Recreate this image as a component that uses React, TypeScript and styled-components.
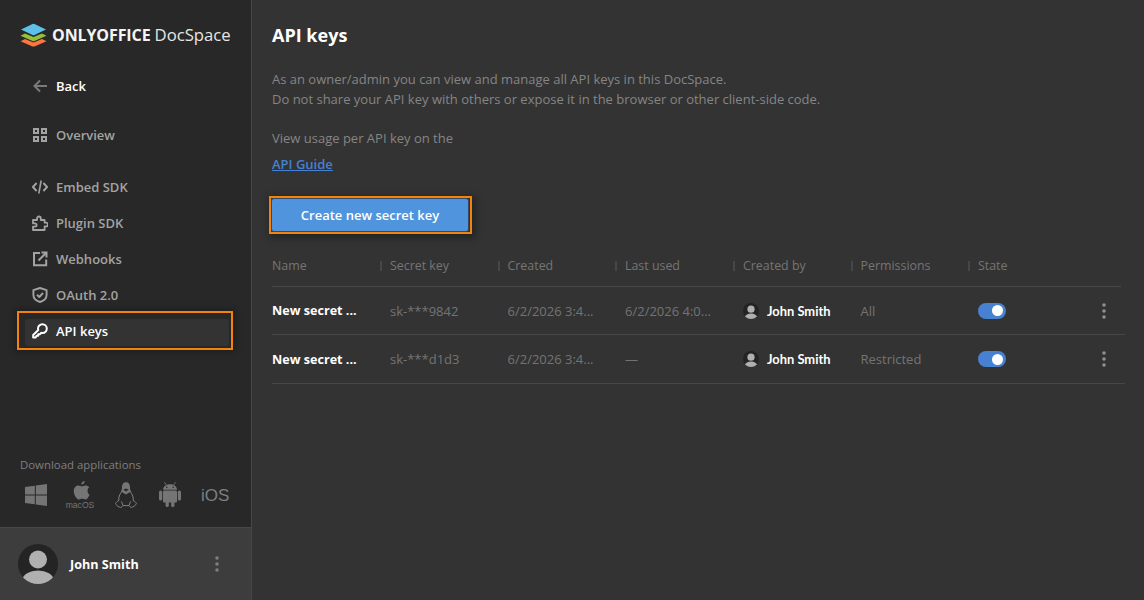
import React from "react";
import styled, { createGlobalStyle } from "styled-components";

const Global = createGlobalStyle`
  html, body { margin: 0; padding: 0; background: #333; }
  body { font-family: "Open Sans", "Liberation Sans", sans-serif; }
  * { box-sizing: border-box; }
`;

const Page = styled.div`
  display: flex;
  width: 1144px;
  height: 600px;
  overflow: hidden;
  background: #333333;
`;

const Sidebar = styled.aside`
  width: 252px;
  height: 600px;
  flex: none;
  display: flex;
  flex-direction: column;
  background: #282828;
  border-right: 1px solid #474747;
`;

const LogoRow = styled.div`
  display: flex;
  align-items: center;
  gap: 5px;
  height: 24px;
  margin: 23px 0 0 20px;
`;

const LogoText = styled.span`
  font-size: 16.7px;
  line-height: 24px;
  color: #e6e6e6;
  white-space: nowrap;
  b { font-size: 16px; font-weight: 700; color: #f4f4f4; margin-right: 4px; letter-spacing: -0.1px; }
`;

const Nav = styled.nav`
  display: flex;
  flex-direction: column;
  margin-top: 21px;
  padding: 0 22px 0 25px;
`;

const NavGroup = styled.div<{ $gap: number }>`
  display: flex;
  flex-direction: column;
  margin-bottom: ${(p) => p.$gap}px;
`;

const NavItem = styled.div<{ $active?: boolean; $white?: boolean }>`
  position: relative;
  display: flex;
  align-items: center;
  gap: 8px;
  height: 36px;
  padding-left: 7px;
  font-size: 13px;
  font-weight: 600;
  color: ${(p) => (p.$active || p.$white ? "#ffffff" : "#a3a3a3")};
  background: ${(p) => (p.$active ? "#333333" : "transparent")};
  ${(p) =>
    p.$active &&
    `
    height: 27px;
    margin: 6px 0 3px;
    padding-bottom: 3px;
    border-radius: 3px;
    &::after {
      content: "";
      position: absolute;
      inset: -8px -4px -4px -8px;
      border: 2px solid #f5820d;
      box-shadow: 0 0 6px 2px rgba(0,0,0,0.25);
      pointer-events: none;
    }
  `}
  svg { flex: none; }
`;

const Spacer = styled.div`
  flex: 1;
`;

const DownloadBlock = styled.div`
  padding: 0 20px;
  height: 70px;
`;

const DownloadLabel = styled.div`
  font-size: 11.4px;
  line-height: 15px;
  font-weight: 400;
  color: #7f7f7f;
`;

const AppIcons = styled.div`
  display: flex;
  align-items: center;
  height: 27px;
  margin-top: 9px;
  padding-left: 5px;
`;

const AppSlot = styled.div<{ $w: number }>`
  width: ${(p) => p.$w}px;
  flex: none;
  display: flex;
  flex-direction: column;
  align-items: flex-start;
`;

const MacIcon = styled.div`
  display: flex;
  flex-direction: column;
  align-items: center;
  width: 28px;
  margin-left: -1px;
  svg { margin-left: 2px; }
  span {
    font-family: "Liberation Sans", sans-serif;
    font-size: 8.6px;
    line-height: 8px;
    margin-top: 1px;
    color: #757575;
  }
`;

const IosLabel = styled.span`
  font-family: "Liberation Sans", sans-serif;
  font-size: 17px;
  line-height: 24px;
  padding-top: 2px;
  color: #7f7f7f;
`;

const Footer = styled.div`
  flex: none;
  height: 73px;
  display: flex;
  align-items: center;
  padding: 0 32px 0 18px;
  background: #3d3d3d;
  border-top: 1px solid #474747;
`;

const FooterName = styled.span`
  flex: 1;
  margin-left: 12px;
  font-size: 12.6px;
  font-weight: 700;
  color: #fff;
`;

const Main = styled.main`
  flex: 1;
  min-width: 0;
  padding: 22px 19px 0 20px;
  display: flex;
  flex-direction: column;
  align-items: flex-start;
`;

const Title = styled.h1`
  margin: 0;
  font-size: 18px;
  line-height: 26px;
  font-weight: 700;
  color: #fff;
`;

const Description = styled.p`
  margin: 21px 0 0;
  font-size: 13px;
  line-height: 20px;
  color: #858585;
`;

const UsageText = styled.p`
  margin: 19px 0 0;
  font-size: 13px;
  line-height: 20px;
  color: #858585;
`;

const GuideLink = styled.a`
  margin-top: 6px;
  font-size: 13px;
  line-height: 20px;
  font-weight: 600;
  color: #4781d1;
  text-decoration: underline;
`;

const CreateButton = styled.button`
  position: relative;
  margin: 24px 0 0 -1px;
  width: 198px;
  height: 34px;
  padding: 0;
  border: 1px solid #2f4b69;
  border-radius: 3px;
  background: #4f94dc;
  color: #fff;
  font-family: inherit;
  font-size: 13px;
  font-weight: 600;
  &::after {
    content: "";
    position: absolute;
    inset: -3px -4px -3px -3px;
    border: 2px solid #f5820d;
    box-shadow: 2px 2px 7px 2px rgba(0, 0, 0, 0.3);
    pointer-events: none;
  }
`;

const Table = styled.div`
  align-self: stretch;
  margin-top: 16px;
`;

const COLS = "118px 117.5px 117.5px 118px 117.5px 117.5px 147px";

const HeaderRow = styled.div`
  display: grid;
  grid-template-columns: ${COLS};
  height: 39px;
  padding-bottom: 2px;
  margin-right: 4px;
  align-items: center;
  border-bottom: 1px solid #474747;
`;

const HeaderCell = styled.div<{ $sep?: boolean }>`
  position: relative;
  font-size: 12.4px;
  line-height: 16px;
  font-weight: 400;
  color: #757575;
  ${(p) =>
    p.$sep &&
    `
    &::before {
      content: "";
      position: absolute;
      left: -10px;
      top: 3px;
      width: 2px;
      height: 10px;
      background: #474747;
    }
  `}
`;

const Row = styled.div<{ $h: number }>`
  display: grid;
  grid-template-columns: ${COLS};
  align-items: center;
  height: ${(p) => p.$h}px;
  border-bottom: 1px solid #474747;
`;

const Cell = styled.div<{ $bold?: boolean }>`
  font-size: ${(p) => (p.$bold ? "12.6px" : "13px")};
  font-weight: ${(p) => (p.$bold ? 700 : 400)};
  color: ${(p) => (p.$bold ? "#fff" : "#737373")};
  white-space: nowrap;
`;

const Owner = styled.div`
  display: flex;
  align-items: center;
  gap: 8px;
  font-family: Lato, "Open Sans", sans-serif;
  font-size: 12.9px;
  font-weight: 700;
  color: #fff;
`;

const StateCell = styled.div`
  display: flex;
  align-items: center;
  justify-content: space-between;
  padding-right: 19px;
`;

const Toggle = styled.div`
  display: flex;
  align-items: center;
  justify-content: flex-end;
  width: 28px;
  height: 16px;
  padding-right: 3px;
  border-radius: 8px;
  background: #4781d1;
  &::after {
    content: "";
    width: 11px;
    height: 11px;
    border-radius: 50%;
    background: #fff;
  }
`;

const Dots = ({ color = "#7f7f7f" }: { color?: string }) => (
  <svg width="4" height="16" viewBox="0 0 4 16" fill={color}>
    <circle cx="2" cy="2" r="1.8" />
    <circle cx="2" cy="8" r="1.8" />
    <circle cx="2" cy="14" r="1.8" />
  </svg>
);

const Avatar = ({ size }: { size: number }) => (
  <svg width={size} height={size} viewBox="0 0 40 40" style={{ flex: "none" }}>
    <defs>
      <clipPath id={`av${size}`}>
        <circle cx="20" cy="20" r="20" />
      </clipPath>
    </defs>
    <circle cx="20" cy="20" r="20" fill="#242424" />
    <g clipPath={`url(#av${size})`} fill="#b0b0b0">
      <circle cx="20" cy="15.5" r="9" />
      <ellipse cx="20" cy="36" rx="15.5" ry="9.5" />
    </g>
  </svg>
);

const Logo = () => (
  <svg width="27" height="24" viewBox="0 0 27 24">
    <path d="M0.5 18.2 L5 16 L13.5 19.4 L22 16 L26.5 18.2 L14.5 23.4 Q13.5 23.8 12.5 23.4 Z" fill="#ff7541" />
    <path d="M0.5 12.8 L5 10.6 L13.5 14 L22 10.6 L26.5 12.8 L14.5 18 Q13.5 18.4 12.5 18 Z" fill="#95c038" />
    <path d="M12.5 0.9 Q13.5 0.5 14.5 0.9 L26 6.4 L14.5 12 Q13.5 12.4 12.5 12 L1 6.4 Z" fill="#5dc0e8" />
  </svg>
);

const ArrowIcon = () => (
  <svg width="16" height="16" viewBox="0 0 16 16" fill="none" stroke="#7a7a7a" strokeWidth="2">
    <path d="M15 8 H3 M8 2.5 L2.5 8 L8 13.5" />
  </svg>
);

const GridIcon = () => (
  <svg width="16" height="16" viewBox="0 0 16 16" fill="none" stroke="#a3a3a3" strokeWidth="2">
    <rect x="2" y="2" width="4" height="4" />
    <rect x="10" y="2" width="4" height="4" />
    <rect x="2" y="10" width="4" height="4" />
    <rect x="10" y="10" width="4" height="4" />
  </svg>
);

const CodeIcon = () => (
  <svg width="16" height="16" viewBox="0 0 16 16" fill="none" stroke="#a3a3a3" strokeWidth="1.9">
    <path d="M4.6 4 L0.9 8 L4.6 12 M11.4 4 L15.1 8 L11.4 12" />
    <path d="M9.2 1.5 L6.8 14.5" strokeWidth="1.6" />
  </svg>
);

const PluginIcon = () => (
  <svg width="16" height="16" viewBox="0 0 16 16" fill="none" stroke="#a3a3a3" strokeWidth="1.8" strokeLinejoin="round">
    <path d="M1 5 H5 V3.4 A1.9 1.9 0 0 1 8.8 3.4 V5 H12.6 V7.6 H14 A1.9 1.9 0 0 1 14 11.4 H12.6 V15 H1 V11.6 H3 A1.6 1.6 0 0 0 3 8.4 H1 Z" />
  </svg>
);

const HookIcon = () => (
  <svg width="16" height="16" viewBox="0 0 16 16" fill="none" stroke="#a3a3a3" strokeWidth="2">
    <path d="M8 2 H2 V14.2 H14.2 V8.5" />
    <path d="M6.5 9.5 L14 2 M9.5 1.5 H14.5 V6.5" />
  </svg>
);

const ShieldIcon = () => (
  <svg width="16" height="16" viewBox="0 0 16 16" fill="none" stroke="#a3a3a3" strokeWidth="1.9" strokeLinejoin="round">
    <path d="M8 1 L14.6 3.2 V8 C14.6 11.4 11.8 13.8 8 15 C4.2 13.8 1.4 11.4 1.4 8 V3.2 Z" />
    <path d="M5 7.8 L7.3 10 L11 6" />
  </svg>
);

const KeyIcon = () => (
  <svg width="16" height="16" viewBox="0 0 16 16" fill="none" stroke="#fff" strokeWidth="2" strokeLinejoin="round" strokeLinecap="round">
    <path d="M10.4 1.2 A4.4 4.4 0 0 1 14.8 5.6 A4.4 4.4 0 0 1 10.4 10 C10 10 9.6 9.9 9.3 9.8 L7.8 11.2 H6.2 V12.8 H4.6 L3.6 14.6 H1.2 V12 L6.3 7 C6.1 6.6 6 6.1 6 5.6 A4.4 4.4 0 0 1 10.4 1.2 Z" />
  </svg>
);

const WinIcon = () => (
  <svg width="22" height="22" viewBox="0 0 22 22" fill="#757575">
    <path d="M0 3 L9.8 1.7 V10.4 H0 Z M10.8 1.5 L22 0 V10.4 H10.8 Z M0 11.4 H9.8 V20.3 L0 19 Z M10.8 11.4 H22 V22 L10.8 20.5 Z" />
  </svg>
);

const AppleIcon = () => (
  <svg width="17" height="19" viewBox="0 0 16 18" fill="#757575">
    <path d="M11 0 C11.1 1.6 9.6 3.5 7.8 3.4 C7.6 1.8 9.3 0.1 11 0 Z M15.6 13 C15 14.5 13.4 17.6 11.7 17.6 C10.6 17.6 10.2 16.9 8.7 16.9 C7.2 16.9 6.8 17.6 5.7 17.6 C3.8 17.6 0.7 13.5 0.7 9.6 C0.7 6.2 3 4.3 5.1 4.3 C6.4 4.3 7.5 5.1 8.3 5.1 C9.1 5.1 10.4 4.2 11.9 4.2 C13 4.2 14.4 4.8 15.3 6 C13 7.3 13.4 11.9 15.6 13 Z" />
  </svg>
);

const LinuxIcon = () => (
  <svg width="22" height="26" viewBox="0 0 22 26" fill="none" stroke="#8a8a8a" strokeWidth="0.9">
    <path d="M7.5 8 C6.5 10.5 4.6 12 4 15 C3.6 16.6 3.6 17.6 4 18.4 C2.6 19 0.8 20.6 0.6 21.6 C0.5 22.4 3.8 25.4 5.6 25.4 C6.8 25.4 7.4 24.2 8 23.6 H14 C14.6 24.2 15.2 25.4 16.4 25.4 C18.2 25.4 21.5 22.4 21.4 21.6 C21.2 20.6 19.4 19 18 18.4 C18.4 17.6 18.4 16.6 18 15 C17.4 12 15.5 10.5 14.5 8" />
    <path d="M11 0.3 C14.2 0.3 15 3 15 5.4 C15 7 15.3 8.4 16 9.6 L11 12.6 L6 9.6 C6.7 8.4 7 7 7 5.4 C7 3 7.8 0.3 11 0.3 Z" fill="#757575" stroke="none" />
    <path d="M8.4 7.8 L11 6.6 L13.6 7.8 L11 9.4 Z" fill="#282828" stroke="none" />
    <path d="M8 23.6 L6.4 19.4 M14 23.6 L15.6 19.4" />
  </svg>
);

const AndroidIcon = () => (
  <svg width="22" height="25" viewBox="0 0 22 25" fill="#757575">
    <path d="M4 7.8 C4.2 4.4 7 2.2 11 2.2 C15 2.2 17.8 4.4 18 7.8 Z" />
    <path d="M5.4 0.2 L7.6 3.2 M16.6 0.2 L14.4 3.2" stroke="#757575" strokeWidth="0.9" />
    <rect x="4" y="8.6" width="14" height="12" rx="1.4" />
    <rect x="0" y="8.6" width="3.2" height="10" rx="1.6" />
    <rect x="18.8" y="8.6" width="3.2" height="10" rx="1.6" />
    <rect x="6.6" y="18" width="3.2" height="7" rx="1.6" />
    <rect x="12.2" y="18" width="3.2" height="7" rx="1.6" />
    <circle cx="7.8" cy="5.2" r="0.8" fill="#282828" />
    <circle cx="14.2" cy="5.2" r="0.8" fill="#282828" />
  </svg>
);

const rows = [
  { key: "sk-***9842", created: "6/2/2026 3:4...", used: "6/2/2026 4:0...", perm: "All", h: 48 },
  { key: "sk-***d1d3", created: "6/2/2026 3:4...", used: "—", perm: "Restricted", h: 49 },
];

const headers = ["Name", "Secret key", "Created", "Last used", "Created by", "Permissions", "State"];

export default function App() {
  return (
    <Page>
      <Global />
      <Sidebar>
        <LogoRow>
          <Logo />
          <LogoText>
            <b>ONLYOFFICE</b>DocSpace
          </LogoText>
        </LogoRow>
        <Nav>
          <NavGroup $gap={13}>
            <NavItem $white>
              <ArrowIcon />
              Back
            </NavItem>
          </NavGroup>
          <NavGroup $gap={16}>
            <NavItem>
              <GridIcon />
              Overview
            </NavItem>
          </NavGroup>
          <NavGroup $gap={0}>
            <NavItem>
              <CodeIcon />
              Embed SDK
            </NavItem>
            <NavItem>
              <PluginIcon />
              Plugin SDK
            </NavItem>
            <NavItem>
              <HookIcon />
              Webhooks
            </NavItem>
            <NavItem>
              <ShieldIcon />
              OAuth 2.0
            </NavItem>
            <NavItem $active>
              <KeyIcon />
              API keys
            </NavItem>
          </NavGroup>
        </Nav>
        <Spacer />
        <DownloadBlock>
          <DownloadLabel>Download applications</DownloadLabel>
          <AppIcons>
            <AppSlot $w={42}>
              <WinIcon />
            </AppSlot>
            <AppSlot $w={48}>
              <MacIcon>
                <AppleIcon />
                <span>macOS</span>
              </MacIcon>
            </AppSlot>
            <AppSlot $w={44}>
              <LinuxIcon />
            </AppSlot>
            <AppSlot $w={42}>
              <AndroidIcon />
            </AppSlot>
            <IosLabel>iOS</IosLabel>
          </AppIcons>
        </DownloadBlock>
        <Footer>
          <Avatar size={40} />
          <FooterName>John Smith</FooterName>
          <Dots />
        </Footer>
      </Sidebar>
      <Main>
        <Title>API keys</Title>
        <Description>
          As an owner/admin you can view and manage all API keys in this DocSpace.
          <br />
          Do not share your API key with others or expose it in the browser or other client-side code.
        </Description>
        <UsageText>View usage per API key on the</UsageText>
        <GuideLink>API Guide</GuideLink>
        <CreateButton>Create new secret key</CreateButton>
        <Table>
          <HeaderRow>
            {headers.map((h, i) => (
              <HeaderCell key={h} $sep={i > 0}>
                {h}
              </HeaderCell>
            ))}
          </HeaderRow>
          {rows.map((r) => (
            <Row key={r.key} $h={r.h}>
              <Cell $bold>New secret ...</Cell>
              <Cell>{r.key}</Cell>
              <Cell>{r.created}</Cell>
              <Cell>{r.used}</Cell>
              <Owner>
                <Avatar size={16} />
                John Smith
              </Owner>
              <Cell>{r.perm}</Cell>
              <StateCell>
                <Toggle />
                <Dots color="#8f8f8f" />
              </StateCell>
            </Row>
          ))}
        </Table>
      </Main>
    </Page>
  );
}
